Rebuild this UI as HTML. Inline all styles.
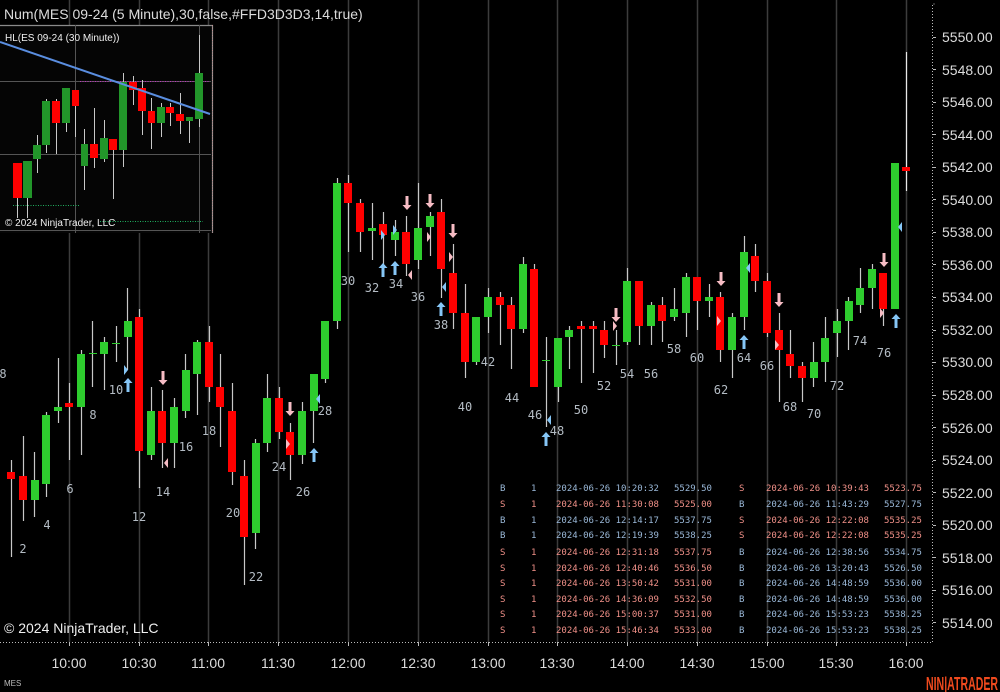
<!DOCTYPE html>
<html><head><meta charset="utf-8">
<style>
html,body{margin:0;padding:0;background:#000;}
body{width:1000px;height:692px;overflow:hidden;position:relative;}
svg{position:absolute;left:0;top:0;}
.ax{font-family:"Liberation Sans",sans-serif;font-size:14px;fill:#dcdcdc;}
.lb{font-family:"DejaVu Sans Mono","Liberation Mono",monospace;font-size:12px;fill:#b4bcc4;text-anchor:middle;}
.tb{font-family:"DejaVu Sans Mono","Liberation Mono",monospace;font-size:9px;}
.b{fill:#9ab8d8}.s{fill:#f09088}
</style></head><body>
<svg width="1000" height="692" viewBox="0 0 1000 692" xmlns="http://www.w3.org/2000/svg">
<rect width="1000" height="692" fill="#000"/>
<g stroke="#3c3c3c" stroke-width="1.5">
<path d="M69.5 0V642M139.5 0V642M208.5 0V642M278.5 0V642M348.5 0V642M418.5 0V642M488.5 0V642M557.5 0V642M627.5 0V642M697.5 0V642M767.5 0V642M836.5 0V642M906.5 0V642"/>
</g>
<path d="M0 642.5H932.5V4H936" stroke="#bbb" stroke-width="1" stroke-dasharray="1,2" fill="none"/>
<g stroke="#bbb"><path d="M69.5 642V646M139.5 642V646M208.5 642V646M278.5 642V646M348.5 642V646M418.5 642V646M488.5 642V646M557.5 642V646M627.5 642V646M697.5 642V646M767.5 642V646M836.5 642V646M906.5 642V646"/>
<path d="M933 37.5h3M933 69.5h3M933 102.5h3M933 134.5h3M933 167.5h3M933 199.5h3M933 232.5h3M933 264.5h3M933 297.5h3M933 330.5h3M933 362.5h3M933 395.5h3M933 427.5h3M933 460.5h3M933 492.5h3M933 525.5h3M933 557.5h3M933 590.5h3M933 622.5h3"/></g>
<g class="ax">
<text x="942" y="42">5550.00</text><text x="942" y="75">5548.00</text><text x="942" y="107">5546.00</text><text x="942" y="140">5544.00</text><text x="942" y="172">5542.00</text><text x="942" y="205">5540.00</text><text x="942" y="237">5538.00</text><text x="942" y="270">5536.00</text><text x="942" y="302">5534.00</text><text x="942" y="335">5532.00</text><text x="942" y="367">5530.00</text><text x="942" y="400">5528.00</text><text x="942" y="433">5526.00</text><text x="942" y="465">5524.00</text><text x="942" y="498">5522.00</text><text x="942" y="530">5520.00</text><text x="942" y="563">5518.00</text><text x="942" y="595">5516.00</text><text x="942" y="628">5514.00</text>
</g>
<g class="ax" text-anchor="middle">
<text x="69" y="668">10:00</text><text x="139" y="668">10:30</text><text x="208" y="668">11:00</text><text x="278" y="668">11:30</text><text x="348" y="668">12:00</text><text x="418" y="668">12:30</text><text x="488" y="668">13:00</text><text x="557" y="668">13:30</text><text x="627" y="668">14:00</text><text x="697" y="668">14:30</text><text x="767" y="668">15:00</text><text x="836" y="668">15:30</text><text x="906" y="668">16:00</text>
</g>
<text x="4" y="686" font-family="Liberation Sans,sans-serif" font-size="8" fill="#bbb">MES</text>
<text x="926" y="690" font-family="Liberation Sans,sans-serif" font-size="18" font-weight="bold" fill="#f04a1e" textLength="72" lengthAdjust="spacingAndGlyphs">NIN|ATRADER</text>

<path stroke="#c8c8c8" stroke-width="1.2" fill="none" d="M11.5 460V557M23.5 436V521M34.5 452V517M46.5 412V497M58.5 358V423M69.5 383V460M81.5 350V455M92.5 321V387M104.5 337V390M116.5 326V362M127.5 288V370M139.5 309V488M151.5 387V460M162.5 390V468M174.5 398V468M185.5 354V418M197.5 340V415M209.5 326V402M220.5 354V447M232.5 383V485M244.5 460V585M255.5 439V549M267.5 374V452M279.5 387V439M290.5 423V480M302.5 402V464M313.5 374V443M325.5 321V383M337.5 178V329M348.5 175V252M360.5 199V252M372.5 203V260M383.5 212V269M395.5 220V256M406.5 216V276M418.5 183V269M430.5 212V256M441.5 199V298M453.5 244V329M465.5 284V378M476.5 317V365M488.5 288V333M500.5 292V345M511.5 297V369M523.5 257V333M534.5 264V387M546.5 337V427M558.5 338V402M569.5 326V369M581.5 321V383M593.5 321V373M604.5 321V358M616.5 330V365M627.5 268V345M639.5 281V345M651.5 302V345M662.5 297V342M674.5 288V321M686.5 273V337M697.5 277V330M709.5 284V317M720.5 292V362M732.5 313V378M744.5 236V330M755.5 244V292M767.5 273V337M779.5 313V402M790.5 330V378M802.5 362V402M813.5 342V387M825.5 317V382M837.5 309V357M848.5 297V350M860.5 268V313M872.5 264V309M883.5 273V326M895.5 163V309"/>
<path stroke="#e8e8e8" stroke-width="1.2" d="M906.5 52V191"/>
<g fill="#2ecc2e">
<rect x="31" y="480" width="8" height="20"/><rect x="42" y="415" width="8" height="69"/><rect x="54" y="407" width="8" height="4"/><rect x="77" y="354" width="8" height="53"/><rect x="89" y="353" width="8" height="1"/><rect x="100" y="342" width="8" height="12"/><rect x="112" y="343" width="8" height="1"/><rect x="124" y="321" width="8" height="16"/><rect x="147" y="411" width="8" height="44"/><rect x="170" y="407" width="8" height="36"/><rect x="182" y="370" width="8" height="41"/><rect x="193" y="342" width="8" height="32"/><rect x="252" y="443" width="8" height="90"/><rect x="263" y="398" width="8" height="45"/><rect x="298" y="411" width="8" height="44"/><rect x="310" y="374" width="8" height="37"/><rect x="321" y="321" width="8" height="58"/><rect x="333" y="183" width="8" height="138"/><rect x="368" y="228" width="8" height="3"/><rect x="391" y="232" width="8" height="8"/><rect x="414" y="228" width="8" height="32"/><rect x="426" y="216" width="8" height="11"/><rect x="472" y="317" width="8" height="45"/><rect x="484" y="297" width="8" height="20"/><rect x="519" y="264" width="8" height="65"/><rect x="542" y="360" width="8" height="1"/><rect x="554" y="338" width="8" height="49"/><rect x="565" y="330" width="8" height="7"/><rect x="612" y="345" width="8" height="1"/><rect x="623" y="281" width="8" height="61"/><rect x="647" y="305" width="8" height="21"/><rect x="670" y="309" width="8" height="8"/><rect x="682" y="277" width="8" height="36"/><rect x="705" y="297" width="8" height="4"/><rect x="728" y="317" width="8" height="33"/><rect x="740" y="252" width="8" height="65"/><rect x="810" y="362" width="8" height="16"/><rect x="821" y="338" width="8" height="24"/><rect x="833" y="321" width="8" height="12"/><rect x="845" y="301" width="8" height="20"/><rect x="856" y="288" width="8" height="17"/><rect x="868" y="269" width="8" height="19"/><rect x="891" y="163" width="8" height="146"/>
</g>
<g fill="#ff0000">
<rect x="7" y="472" width="8" height="7"/><rect x="19" y="476" width="8" height="24"/><rect x="65" y="403" width="8" height="4"/><rect x="135" y="317" width="8" height="134"/><rect x="158" y="411" width="8" height="32"/><rect x="205" y="342" width="8" height="45"/><rect x="216" y="387" width="8" height="20"/><rect x="228" y="411" width="8" height="61"/><rect x="240" y="476" width="8" height="61"/><rect x="275" y="398" width="8" height="34"/><rect x="286" y="432" width="8" height="23"/><rect x="344" y="183" width="8" height="20"/><rect x="356" y="203" width="8" height="29"/><rect x="379" y="224" width="8" height="11"/><rect x="402" y="232" width="8" height="32"/><rect x="437" y="212" width="8" height="57"/><rect x="449" y="273" width="8" height="40"/><rect x="461" y="313" width="8" height="49"/><rect x="496" y="297" width="8" height="8"/><rect x="507" y="305" width="8" height="24"/><rect x="530" y="269" width="8" height="118"/><rect x="577" y="326" width="8" height="3"/><rect x="589" y="326" width="8" height="3"/><rect x="600" y="330" width="8" height="15"/><rect x="635" y="281" width="8" height="45"/><rect x="658" y="305" width="8" height="16"/><rect x="693" y="277" width="8" height="24"/><rect x="716" y="297" width="8" height="53"/><rect x="751" y="256" width="8" height="25"/><rect x="763" y="281" width="8" height="52"/><rect x="775" y="330" width="8" height="20"/><rect x="786" y="354" width="8" height="12"/><rect x="798" y="366" width="8" height="12"/><rect x="879" y="273" width="8" height="36"/><rect x="902" y="167" width="8" height="4"/>
</g>
<g fill="#86c6f6">
<path d="M128 378l-4.5 5h3v9h3v-9h3z"/><path d="M314 448l-4.5 5h3v9h3v-9h3z"/><path d="M383 263l-4.5 5h3v9h3v-9h3z"/><path d="M395 261l-4.5 5h3v9h3v-9h3z"/><path d="M441 302l-4.5 5h3v9h3v-9h3z"/><path d="M546 432l-4.5 5h3v9h3v-9h3z"/><path d="M744 335l-4.5 5h3v9h3v-9h3z"/><path d="M896 314l-4.5 5h3v9h3v-9h3z"/>
<path d="M124 365l4 5l-4 5z"/><path d="M320 394l-4 5l4 5z"/><path d="M381 230l4 5l-4 5z"/><path d="M393 225l4 5l-4 5z"/><path d="M446 282l-4 5l4 5z"/><path d="M551 415l-4 5l4 5z"/><path d="M750 263l-4 5l4 5z"/><path d="M902 222l-4 5l4 5z"/>
</g>
<g fill="#f6bcc4">
<path d="M163 385l-4.5 -5h3v-9h3v9h3z"/><path d="M290 416l-4.5 -5h3v-9h3v9h3z"/><path d="M407 210l-4.5 -5h3v-9h3v9h3z"/><path d="M430 208l-4.5 -5h3v-9h3v9h3z"/><path d="M453 238l-4.5 -5h3v-9h3v9h3z"/><path d="M616 322l-4.5 -5h3v-9h3v9h3z"/><path d="M721 286l-4.5 -5h3v-9h3v9h3z"/><path d="M779 307l-4.5 -5h3v-9h3v9h3z"/><path d="M884 267l-4.5 -5h3v-9h3v9h3z"/>
<path d="M168 458l-4 5l4 5z"/><path d="M286 439l4 5l-4 5z"/><path d="M412 270l-4 5l4 5z"/><path d="M427 232l4 5l-4 5z"/><path d="M449 252l4 5l-4 5z"/><path d="M613 321l4 5l-4 5z"/><path d="M717 316l4 5l-4 5z"/><path d="M775 340l4 5l-4 5z"/><path d="M880 308l4 5l-4 5z"/>
</g>
<g class="lb">
<text x="3" y="378">8</text><text x="23" y="553">2</text><text x="47" y="529">4</text><text x="70" y="493">6</text><text x="93" y="419">8</text><text x="116" y="394">10</text><text x="139" y="521">12</text><text x="163" y="496">14</text><text x="186" y="451">16</text><text x="209" y="435">18</text><text x="233" y="517">20</text><text x="256" y="581">22</text><text x="279" y="471">24</text><text x="303" y="496">26</text><text x="325" y="415">28</text><text x="348" y="285">30</text><text x="372" y="292">32</text><text x="396" y="288">34</text><text x="418" y="301">36</text><text x="441" y="329">38</text><text x="465" y="411">40</text><text x="488" y="366">42</text><text x="512" y="402">44</text><text x="535" y="419">46</text><text x="557" y="435">48</text><text x="581" y="414">50</text><text x="604" y="390">52</text><text x="627" y="378">54</text><text x="651" y="378">56</text><text x="674" y="353">58</text><text x="697" y="362">60</text><text x="721" y="394">62</text><text x="744" y="362">64</text><text x="767" y="370">66</text><text x="790" y="411">68</text><text x="814" y="418">70</text><text x="837" y="390">72</text><text x="860" y="345">74</text><text x="884" y="357">76</text>
</g>
<text x="4" y="19" font-family="Liberation Sans,sans-serif" font-size="14" fill="#dcdcdc">Num(MES 09-24 (5 Minute),30,false,#FFD3D3D3,14,true)</text>
<text x="4" y="633" font-family="Liberation Sans,sans-serif" font-size="14" fill="#f0f0f0">© 2024 NinjaTrader, LLC</text>

<rect x="0" y="25" width="212" height="208" fill="#050505"/>
<path d="M0 25.5H212.5V233" stroke="#8a8a8a" stroke-width="1.2" fill="none"/>
<path d="M212.5 25V233" stroke="#c09090" stroke-dasharray="1,1.5"/>
<g stroke="#555" stroke-width="1"><path d="M0 81.5H211M0 154.5H211M0 230.5H211M75.5 25V233M199.5 25V233"/></g>
<path d="M80 81.5H210" stroke="#c030c0" stroke-dasharray="1,1.5"/>
<path d="M13 205.5H80M100 221.5H203" stroke="#20b060" stroke-dasharray="1,1.5"/>
<path stroke="#c8c8c8" stroke-width="1" d="M17.5 163V218M27.5 161V218M37.5 135V173M46.5 99V153M56.5 99V154M66.5 88V132M75.5 90V137M84.5 129V190M94.5 108V168M104.5 120V162M113.5 139V199M123.5 73V167M133.5 76V105M142.5 80V135M151.5 98V149M161.5 103V137M170.5 103V126M180.5 93V134M189.5 117V143M199.5 35V127"/>
<g fill="#22962a"><rect x="23" y="161" width="9" height="37"/><rect x="33" y="145" width="8" height="14"/><rect x="42" y="101" width="8" height="44"/><rect x="62" y="88" width="8" height="35"/><rect x="81" y="144" width="7" height="22"/><rect x="100" y="138" width="8" height="21"/><rect x="119" y="82" width="8" height="68"/><rect x="157" y="107" width="8" height="16"/><rect x="186" y="117" width="7" height="4"/><rect x="195" y="73" width="8" height="46"/></g>
<g fill="#ff0000"><rect x="13" y="163" width="9" height="35"/><rect x="52" y="101" width="8" height="22"/><rect x="72" y="90" width="7" height="16"/><rect x="90" y="144" width="8" height="14"/><rect x="109" y="139" width="8" height="11"/><rect x="129" y="82" width="8" height="8"/><rect x="138" y="88" width="8" height="23"/><rect x="148" y="111" width="7" height="12"/><rect x="166" y="107" width="8" height="6"/><rect x="176" y="114" width="8" height="7"/></g>
<path d="M0 42L210 114" stroke="#5a8ee0" stroke-width="2"/>
<text x="5" y="41" font-family="Liberation Sans,sans-serif" font-size="10" fill="#f0f0f0">HL(ES 09-24 (30 Minute))</text>
<text x="5" y="226" font-family="Liberation Sans,sans-serif" font-size="10" fill="#f0f0f0">© 2024 NinjaTrader, LLC</text>

<g class="tb">
<text y="491"><tspan x="500" class="b">B</tspan><tspan x="531" class="b">1</tspan><tspan x="556" class="b">2024-06-26 10:20:32</tspan><tspan x="674" class="b">5529.50</tspan><tspan x="739" class="s">S</tspan><tspan x="766" class="s">2024-06-26 10:39:43</tspan><tspan x="884" class="s">5523.75</tspan></text>
<text y="507"><tspan x="500" class="s">S</tspan><tspan x="531" class="s">1</tspan><tspan x="556" class="s">2024-06-26 11:30:08</tspan><tspan x="674" class="s">5525.00</tspan><tspan x="739" class="b">B</tspan><tspan x="766" class="b">2024-06-26 11:43:29</tspan><tspan x="884" class="b">5527.75</tspan></text>
<text y="523"><tspan x="500" class="b">B</tspan><tspan x="531" class="b">1</tspan><tspan x="556" class="b">2024-06-26 12:14:17</tspan><tspan x="674" class="b">5537.75</tspan><tspan x="739" class="s">S</tspan><tspan x="766" class="s">2024-06-26 12:22:08</tspan><tspan x="884" class="s">5535.25</tspan></text>
<text y="538"><tspan x="500" class="b">B</tspan><tspan x="531" class="b">1</tspan><tspan x="556" class="b">2024-06-26 12:19:39</tspan><tspan x="674" class="b">5538.25</tspan><tspan x="739" class="s">S</tspan><tspan x="766" class="s">2024-06-26 12:22:08</tspan><tspan x="884" class="s">5535.25</tspan></text>
<text y="555"><tspan x="500" class="s">S</tspan><tspan x="531" class="s">1</tspan><tspan x="556" class="s">2024-06-26 12:31:18</tspan><tspan x="674" class="s">5537.75</tspan><tspan x="739" class="b">B</tspan><tspan x="766" class="b">2024-06-26 12:38:56</tspan><tspan x="884" class="b">5534.75</tspan></text>
<text y="571"><tspan x="500" class="s">S</tspan><tspan x="531" class="s">1</tspan><tspan x="556" class="s">2024-06-26 12:40:46</tspan><tspan x="674" class="s">5536.50</tspan><tspan x="739" class="b">B</tspan><tspan x="766" class="b">2024-06-26 13:20:43</tspan><tspan x="884" class="b">5526.50</tspan></text>
<text y="586"><tspan x="500" class="s">S</tspan><tspan x="531" class="s">1</tspan><tspan x="556" class="s">2024-06-26 13:50:42</tspan><tspan x="674" class="s">5531.00</tspan><tspan x="739" class="b">B</tspan><tspan x="766" class="b">2024-06-26 14:48:59</tspan><tspan x="884" class="b">5536.00</tspan></text>
<text y="602"><tspan x="500" class="s">S</tspan><tspan x="531" class="s">1</tspan><tspan x="556" class="s">2024-06-26 14:36:09</tspan><tspan x="674" class="s">5532.50</tspan><tspan x="739" class="b">B</tspan><tspan x="766" class="b">2024-06-26 14:48:59</tspan><tspan x="884" class="b">5536.00</tspan></text>
<text y="617"><tspan x="500" class="s">S</tspan><tspan x="531" class="s">1</tspan><tspan x="556" class="s">2024-06-26 15:00:37</tspan><tspan x="674" class="s">5531.00</tspan><tspan x="739" class="b">B</tspan><tspan x="766" class="b">2024-06-26 15:53:23</tspan><tspan x="884" class="b">5538.25</tspan></text>
<text y="633"><tspan x="500" class="s">S</tspan><tspan x="531" class="s">1</tspan><tspan x="556" class="s">2024-06-26 15:46:34</tspan><tspan x="674" class="s">5533.00</tspan><tspan x="739" class="b">B</tspan><tspan x="766" class="b">2024-06-26 15:53:23</tspan><tspan x="884" class="b">5538.25</tspan></text>
</g>
</svg>
</body></html>
